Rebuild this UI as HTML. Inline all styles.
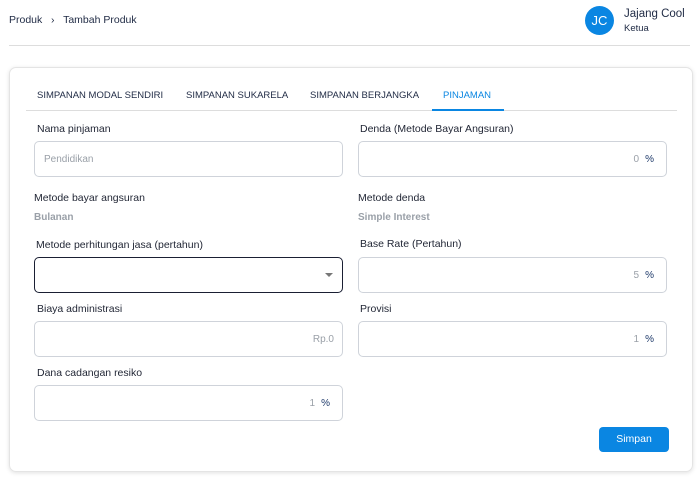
<!DOCTYPE html>
<html><head><style>
*{box-sizing:border-box;margin:0;padding:0}
body{width:698px;height:493px;background:#fff;font-family:"Liberation Sans",sans-serif;color:#1f2a44;position:relative;overflow:hidden;font-size:11px}
.a{position:absolute}
.lbl{position:absolute;font-size:10.5px;color:#1f2433}
.inp{position:absolute;width:309px;height:36px;border:1px solid #cfd3da;border-radius:5px;font-size:10px;color:#9aa0a8}
.val{position:absolute;right:12px;top:12px}
.pct{color:#1f3b6b;margin-left:6px}
.tab{position:absolute;top:90px;font-size:9.5px;color:#1f2a44}
</style></head><body>
<div class="a" style="left:9px;top:14px;font-size:10.5px">Produk &nbsp;&nbsp;›&nbsp;&nbsp; Tambah Produk</div>
<div class="a" style="left:585px;top:6px;width:29px;height:29px;border-radius:50%;background:#0a86e2;color:#fff;font-size:13px;text-align:center;line-height:29px">JC</div>
<div class="a" style="left:624px;top:8px;font-size:11.5px;color:#1f2a44">Jajang Cool</div>
<div class="a" style="left:624px;top:23px;font-size:9.5px">Ketua</div>
<div class="a" style="left:9px;top:45px;width:681px;height:1px;background:#ddd"></div>
<div class="a" style="left:9px;top:67px;width:684px;height:405px;border:1px solid #e4e4e4;border-radius:7px;box-shadow:0 1px 4px rgba(0,0,0,.12)"></div>
<div class="tab" style="left:37px">SIMPANAN MODAL SENDIRI</div>
<div class="tab" style="left:186px">SIMPANAN SUKARELA</div>
<div class="tab" style="left:310px">SIMPANAN BERJANGKA</div>
<div class="tab" style="left:443px;color:#0a86e2">PINJAMAN</div>
<div class="a" style="left:26px;top:110px;width:651px;height:1px;background:#ddd"></div>
<div class="a" style="left:432px;top:109px;width:72px;height:2px;background:#0a86e2"></div>

<div class="lbl" style="left:37px;top:123px">Nama pinjaman</div>
<div class="inp" style="left:34px;top:141px"><span class="a" style="left:9px;top:12px">Pendidikan</span></div>
<div class="lbl" style="left:360px;top:123px">Denda (Metode Bayar Angsuran)</div>
<div class="inp" style="left:358px;top:141px"><span class="val">0<span class="pct">%</span></span></div>

<div class="lbl" style="left:34px;top:192px">Metode bayar angsuran</div>
<div class="a" style="left:34px;top:212px;font-size:10px;color:#9aa0a8;font-weight:bold">Bulanan</div>
<div class="lbl" style="left:358px;top:192px">Metode denda</div>
<div class="a" style="left:358px;top:212px;font-size:10px;color:#9aa0a8;font-weight:bold">Simple Interest</div>

<div class="lbl" style="left:36px;top:239px">Metode perhitungan jasa (pertahun)</div>
<div class="inp" style="left:34px;top:257px;border-color:#1a1f33"><span class="a" style="right:9px;top:15px;width:0;height:0;border-left:4px solid transparent;border-right:4px solid transparent;border-top:4px solid #777"></span></div>
<div class="lbl" style="left:360px;top:238px">Base Rate (Pertahun)</div>
<div class="inp" style="left:358px;top:257px"><span class="val">5<span class="pct">%</span></span></div>

<div class="lbl" style="left:37px;top:303px">Biaya administrasi</div>
<div class="inp" style="left:34px;top:321px"><span class="val" style="right:8px">Rp.0</span></div>
<div class="lbl" style="left:360px;top:303px">Provisi</div>
<div class="inp" style="left:358px;top:321px"><span class="val">1<span class="pct">%</span></span></div>

<div class="lbl" style="left:37px;top:367px">Dana cadangan resiko</div>
<div class="inp" style="left:34px;top:385px"><span class="val">1<span class="pct">%</span></span></div>

<div class="a" style="left:599px;top:427px;width:70px;height:25px;background:#0a86e2;border-radius:4px;color:#fff;font-size:10.5px;text-align:center;line-height:25px">Simpan</div>
</body></html>
